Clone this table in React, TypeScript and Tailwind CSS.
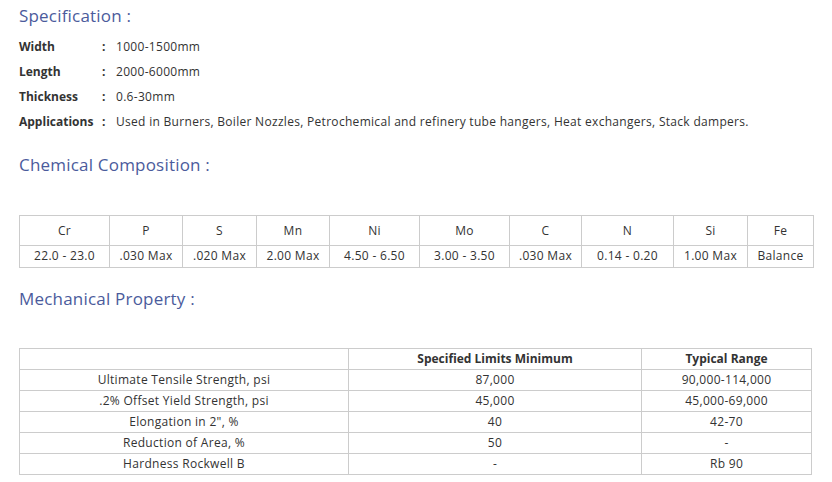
import React from 'react';

const specs = [
  { label: 'Width', value: '1000-1500mm' },
  { label: 'Length', value: '2000-6000mm' },
  { label: 'Thickness', value: '0.6-30mm' },
  {
    label: 'Applications',
    value:
      'Used in Burners, Boiler Nozzles, Petrochemical and refinery tube hangers, Heat exchangers, Stack dampers.',
  },
];

const chemCols = [
  { el: 'Cr', val: '22.0 - 23.0', w: 'w-[90px]' },
  { el: 'P', val: '.030 Max', w: 'w-[73px]' },
  { el: 'S', val: '.020 Max', w: 'w-[74px]' },
  { el: 'Mn', val: '2.00 Max', w: 'w-[73px]' },
  { el: 'Ni', val: '4.50 - 6.50', w: 'w-[90px]' },
  { el: 'Mo', val: '3.00 - 3.50', w: 'w-[90px]' },
  { el: 'C', val: '.030 Max', w: 'w-[72px]' },
  { el: 'N', val: '0.14 - 0.20', w: 'w-[92px]' },
  { el: 'Si', val: '1.00 Max', w: 'w-[74px]' },
  { el: 'Fe', val: 'Balance', w: 'w-[66px]' },
];

const mechRows = [
  ['Ultimate Tensile Strength, psi', '87,000', '90,000-114,000'],
  ['.2% Offset Yield Strength, psi', '45,000', '45,000-69,000'],
  ['Elongation in 2", %', '40', '42-70'],
  ['Reduction of Area, %', '50', '-'],
  ['Hardness Rockwell B', '-', 'Rb 90'],
];

const Heading = ({ children }: { children: React.ReactNode }) => (
  <h2 className="h-8 text-[17px] leading-8 tracking-[0.2px] text-[#4b5b9c]">{children}</h2>
);

export default function App() {
  return (
    <div className="w-[832px] h-[482px] bg-white px-[19px] text-[12px] tracking-[0.3px] text-[#333] font-['Open_Sans',sans-serif] overflow-hidden">
      <Heading>Specification :</Heading>

      <div className="mt-[2px]">
        {specs.map((s) => (
          <div key={s.label} className="flex h-[25px] items-center">
            <span className="w-[83px] font-bold tracking-normal">{s.label}</span>
            <span className="w-[14px] font-bold">:</span>
            <span>{s.value}</span>
          </div>
        ))}
      </div>

      <div className="mt-[15px]">
        <Heading>Chemical Composition :</Heading>
      </div>

      <table className="mt-[34px] w-[794px] border-collapse table-fixed text-center">
        <tbody>
          <tr>
            {chemCols.map((c) => (
              <td key={c.el} className={`${c.w} h-[30px] border border-[#ccc]`}>
                {c.el}
              </td>
            ))}
          </tr>
          <tr>
            {chemCols.map((c) => (
              <td key={c.el} className="h-[22px] border border-[#ccc] pb-px">
                {c.val}
              </td>
            ))}
          </tr>
        </tbody>
      </table>

      <div className="mt-[15px]">
        <Heading>Mechanical Property :</Heading>
      </div>

      <table className="mt-[33px] w-[793px] border-collapse table-fixed text-center">
        <thead>
          <tr>
            <th className="w-[329px] h-[21px] border border-[#ccc]"></th>
            <th className="w-[293px] h-[21px] border border-[#ccc] font-bold tracking-normal">
              Specified Limits Minimum
            </th>
            <th className="h-[21px] border border-[#ccc] font-bold tracking-normal">Typical Range</th>
          </tr>
        </thead>
        <tbody>
          {mechRows.map((r) => (
            <tr key={r[0]}>
              {r.map((cell, i) => (
                <td key={i} className="h-[21px] border border-[#ccc] p-0">
                  {cell}
                </td>
              ))}
            </tr>
          ))}
        </tbody>
      </table>
    </div>
  );
}
